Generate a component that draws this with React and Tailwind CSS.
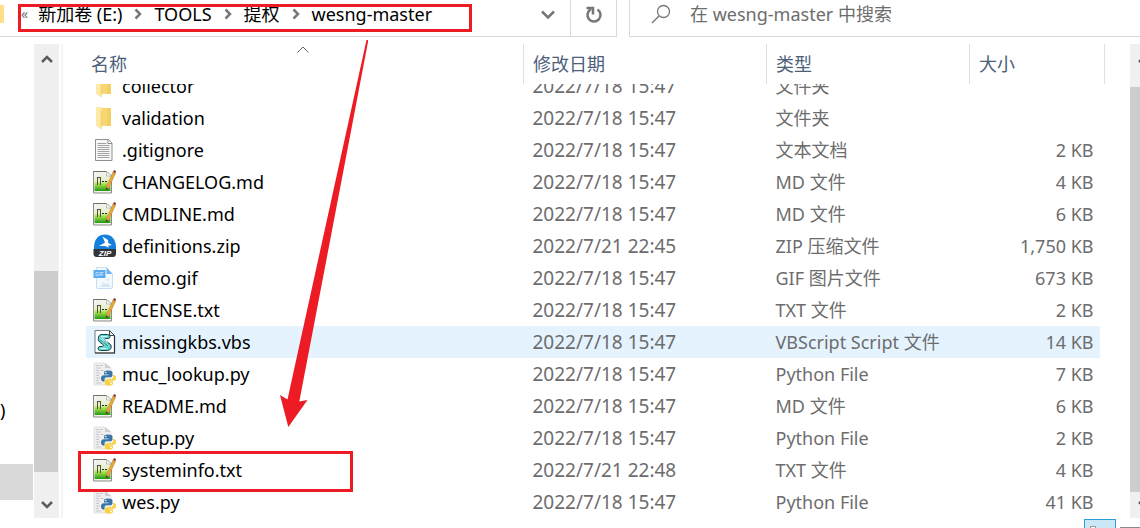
import { useState } from "react"

const files = [
  { name: "collector", icon: "folder", date: "2022/7/18 15:47", type: "文件夹", size: "" },
  { name: "validation", icon: "folder", date: "2022/7/18 15:47", type: "文件夹", size: "" },
  { name: ".gitignore", icon: "text", date: "2022/7/18 15:47", type: "文本文档", size: "2 KB" },
  { name: "CHANGELOG.md", icon: "notepad", date: "2022/7/18 15:47", type: "MD 文件", size: "4 KB" },
  { name: "CMDLINE.md", icon: "notepad", date: "2022/7/18 15:47", type: "MD 文件", size: "6 KB" },
  { name: "definitions.zip", icon: "zip", date: "2022/7/21 22:45", type: "ZIP 压缩文件", size: "1,750 KB" },
  { name: "demo.gif", icon: "gif", date: "2022/7/18 15:47", type: "GIF 图片文件", size: "673 KB" },
  { name: "LICENSE.txt", icon: "notepad", date: "2022/7/18 15:47", type: "TXT 文件", size: "2 KB" },
  { name: "missingkbs.vbs", icon: "script", date: "2022/7/18 15:47", type: "VBScript Script 文件", size: "14 KB" },
  { name: "muc_lookup.py", icon: "python", date: "2022/7/18 15:47", type: "Python File", size: "7 KB" },
  { name: "README.md", icon: "notepad", date: "2022/7/18 15:47", type: "MD 文件", size: "6 KB" },
  { name: "setup.py", icon: "python", date: "2022/7/18 15:47", type: "Python File", size: "2 KB" },
  { name: "systeminfo.txt", icon: "notepad", date: "2022/7/21 22:48", type: "TXT 文件", size: "4 KB" },
  { name: "wes.py", icon: "python", date: "2022/7/18 15:47", type: "Python File", size: "41 KB" },
]

function FolderIcon() {
  return (
    <svg width="24" height="26" viewBox="0 0 24 26" className="shrink-0">
      <path d="M8 3h10v18H8z" fill="#f7d674" />
      <path d="M14 3h4v18h-4z" fill="#f5cf62" />
      <path d="M3 2h5.500v2.500l-0.500 19.500L3 21z" fill="#ffe9a6" />
      <path d="M8.200 6v18" stroke="#f0cb66" strokeWidth="0.800" />
    </svg>
  )
}

function TextIcon() {
  return (
    <svg width="24" height="26" viewBox="0 0 24 26" className="shrink-0">
      <path d="M2.500 2.500h13l3.500 3.500v17.500H2.500z" fill="#f7f7f7" stroke="#8f8f8f" />
      <path d="M15 2.500V6.500h4" fill="#fff" stroke="#8f8f8f" />
      <path d="M4.500 6.500h9M4.500 8.500h12M4.500 10.500h12M4.500 12.500h12M4.500 14.500h12M4.500 16.500h12M4.500 18.500h12M4.500 20.500h12" stroke="#a3a3a3" />
    </svg>
  )
}

function NotepadIcon() {
  return (
    <svg width="24" height="26" viewBox="0 0 24 26" className="shrink-0">
      <defs>
        <linearGradient id="note" x1="0" y1="0" x2="0" y2="1">
          <stop offset="0" stopColor="#f0f3ea" />
          <stop offset="0.400" stopColor="#e4f0c4" />
          <stop offset="0.600" stopColor="#a4dc4a" />
          <stop offset="1" stopColor="#1f9a12" />
        </linearGradient>
      </defs>
      <path d="M0.500 2.500h13l5 4.500v17h-18z" fill="#f1f1ee" stroke="#8c8c86" />
      <path d="M1.500 5.500h16v16.500h-16z" fill="url(#note)" />
      <path d="M0.500 2.500h13" stroke="#5c5c55" strokeDasharray="1.500 1" />
      <path d="M13.500 2.500v4.500h5z" fill="#fff" stroke="#a5a5a0" strokeWidth="0.700" />
      <path d="M4.500 8v8M7.500 8v8M4 8.500h4" fill="none" stroke="#4a523f" />
      <path d="M9 12.500h2M12 12.500h2" stroke="#26331c" strokeWidth="1.200" />
      <path d="M13 18.500L20 3l2.500 1.200L15.500 19.500z" fill="#eda935" stroke="#a8742a" strokeWidth="0.500" />
      <path d="M20 3L21 1l2 1-0.500 2.200z" fill="#8a3a36" />
      <path d="M13 18.500l2.500 1-2.700 2.300z" fill="#544025" />
    </svg>
  )
}

function ZipIcon() {
  return (
    <svg width="24" height="26" viewBox="0 0 24 26" className="shrink-0">
      <path d="M1 14C1 6 6 1.500 12 1.500S23 6 23 14v3H1z" fill="#147fdc" />
      <path d="M9.500 3.500l5.500 3.500 0.200 3 3.800 2-4 0.800 1 2-4-1.800H6l3.500-2 2.500-1.500z" fill="#fff" />
      <path d="M0.500 16h22.500v5.500q-0.500 2.500-3 2.500H3.500q-2.500 0-3-2.500z" fill="#32363b" />
      <text x="12" y="23" textAnchor="middle" fontSize="8" fontWeight="700" fontStyle="italic" fill="#fff" fontFamily="Liberation Sans, sans-serif">ZIP</text>
    </svg>
  )
}

function GifIcon() {
  return (
    <svg width="24" height="26" viewBox="0 0 24 26" className="shrink-0">
      <path d="M3.500 2.500h10L19.500 9v13q0 1.500-1.500 1.500H5q-1.500 0-1.500-1.500z" fill="#f4f9fe" stroke="#c5def5" />
      <path d="M13.500 2.500L19.500 9h-6z" fill="#6db5f2" />
      <path d="M7 22l3.500-5 2.500 2.500 2-1.500 3 4z" fill="#d3e7f9" />
      <circle cx="14.500" cy="14.500" r="1.500" fill="#e0eefb" />
      <rect x="0.500" y="5" width="12" height="8" fill="#5aabf0" />
      <text x="6.500" y="11" textAnchor="middle" fontSize="5" fontWeight="700" fill="#c9e4fc" fontFamily="Liberation Sans, sans-serif">GIF</text>
    </svg>
  )
}

function ScriptIcon() {
  return (
    <svg width="24" height="26" viewBox="0 0 24 26" className="shrink-0">
      <path d="M2 1.500h14.500l5 5V24H2z" fill="#fff" stroke="#777" />
      <path d="M21.500 7v17H2" fill="none" stroke="#333" strokeWidth="1.200" />
      <path d="M16.500 1.500v5h5z" fill="#e8e8e8" stroke="#444" />
      <path d="M8 5.500h6.500q2.500 0 2.500 2t-2 2h-2.500q-1.500 0.500-0.500 2l5 3.500q2 2 1 4-1 2.500-3.500 2.500H7.500q-2.500 0-2.500-2t2-2h2.500q1.500-0.500 0.500-2L6.500 13Q4.500 11 5.500 8q0.500-2 2.500-2.500z" fill="#62d5d3" stroke="#16484c" />
      <path d="M8 7.500h6.500M7.500 10l8 7M7.500 19.500h6M8.500 8.500l6 5" fill="none" stroke="#e6ffff" strokeWidth="0.900" />
      <path d="M10.500 13l4.500 4M7.500 11l2 2" stroke="#153e42" strokeWidth="0.700" />
    </svg>
  )
}

function PythonIcon() {
  return (
    <svg width="24" height="26" viewBox="0 0 24 26" className="shrink-0">
      <path d="M1 2h11l6 5v17H1z" fill="#efefef" stroke="#dcdcdc" strokeWidth="0.800" />
      <path d="M12 2v5h6z" fill="#cfcfcf" />
      <path d="M3 4.500h3M7 4.500h3M3 7h5M3 9.500h3M7.500 9.500h3M3 12h4M3 14.500h3M3 17h4M3 19.500h3M3 22h5" stroke="#c6c6c6" />
      <path d="M15 9.500c-3 0-4 0.800-4 2.200v1.800h4.500v0.800h-5C8.800 14.300 8 16 8 17.500s0.700 3 2 3h1.500v-2c0-1.500 1-2.300 2.300-2.300h3.700c1.200 0 2-0.800 2-2v-2.500c0-1.500-1.500-2.200-4.500-2.200z" fill="#3b74a8" />
      <path d="M16 24.500c3 0 4-0.800 4-2.200v-1.800h-4.500v-0.800h5c1.600 0 2.500-1 2.500-2.800 0-1.600-0.500-3-2-3h-1v2c0 1.500-1 2.300-2.300 2.300h-4c-1.200 0-2 0.800-2 2v2.300c0 1.500 1.500 2 4.300 2z" fill="#fbd03f" />
      <circle cx="12.800" cy="11.600" r="0.800" fill="#fff" />
      <circle cx="18.200" cy="22.400" r="0.800" fill="#fff" />
    </svg>
  )
}

const icons = {
  folder: FolderIcon,
  text: TextIcon,
  notepad: NotepadIcon,
  zip: ZipIcon,
  gif: GifIcon,
  script: ScriptIcon,
  python: PythonIcon,
}

function Crumb({ children, last }) {
  return (
    <>
      <a href="#" className="whitespace-nowrap text-black">{children}</a>
      {!last && (
        <svg width="8" height="12" viewBox="0 0 8 12" className="mx-3 shrink-0">
          <path d="M1.500 1.500L6 6l-4.500 4.500" fill="none" stroke="#777" strokeWidth="2.500" />
        </svg>
      )}
    </>
  )
}

function AddressBar() {
  const [query, setQuery] = useState("")

  return (
    <header className="flex gap-3">
      <div className="flex h-[37px] w-[617px] shrink-0 border-r border-b border-[#d9d9d9]">
        <nav aria-label="路径" className="flex flex-1 items-center pb-2">
          <span className="h-[18px] w-1 bg-[#ffe08a]" />
          <span className="mr-2.5 ml-[17px] text-sm text-gray-500">«</span>
          <Crumb>新加卷 (E:)</Crumb>
          <Crumb>TOOLS</Crumb>
          <Crumb>提权</Crumb>
          <Crumb last>wesng-master</Crumb>
        </nav>
        <button aria-label="以前的位置" className="flex w-11 items-center justify-center pb-1.5">
          <svg width="14" height="10" viewBox="0 0 14 10">
            <path d="M1 1.500l6 6 6-6" fill="none" stroke="#777" strokeWidth="2.500" />
          </svg>
        </button>
        <button aria-label="刷新" className="flex w-[46px] items-center justify-center border-l border-[#d9d9d9] pb-1.5">
          <svg width="18" height="18" viewBox="0 0 18 18">
            <path d="M12.500 3.500a6.500 6.500 0 1 1-6.500-0.300" fill="none" stroke="#777" strokeWidth="2.500" />
            <path d="M1.500 2h6.500v6.500" fill="none" stroke="#777" strokeWidth="2.500" />
          </svg>
        </button>
      </div>
      <label className="flex h-[37px] flex-1 items-center border-b border-l border-[#d9d9d9] pb-2 pl-[21px]">
        <svg width="20" height="20" viewBox="0 0 20 20" className="shrink-0">
          <circle cx="12.500" cy="7.500" r="6" fill="none" stroke="#777" strokeWidth="1.300" />
          <path d="M8 12l-7 7" stroke="#777" strokeWidth="1.500" />
        </svg>
        <input
          type="text"
          aria-label="搜索"
          placeholder="在 wesng-master 中搜索"
          className="ml-[19px] w-full outline-none placeholder:text-[#6d6d6d]"
          value={query}
          onChange={(e) => setQuery(e.target.value)}
        />
      </label>
    </header>
  )
}

function ArrowButton({ label, down }) {
  return (
    <button aria-label={label} className="flex h-[26px] w-[25px] shrink-0 items-center justify-center">
      <svg width="12" height="10" viewBox="0 0 12 10">
        <path d={down ? "M1 2l5 5 5-5" : "M1 8l5-5 5 5"} fill="none" stroke="#5c5c5c" strokeWidth="2.500" />
      </svg>
    </button>
  )
}

function Sidebar() {
  return (
    <aside className="flex shrink-0">
      <ul className="flex w-[34px] flex-col justify-end pr-px pb-[18px]">
        <li className="flex h-9 items-center text-black">)</li>
        <li className="h-9" />
        <li className="h-9 bg-[#d9d9d9]" />
      </ul>
      <div className="flex w-[25px] flex-col bg-[#f0f0f0] pt-0.5">
        <ArrowButton label="向上滚动" />
        <div className="flex-1" />
        <div className="mr-px h-[201px] bg-[#cdcdcd]" />
        <div className="h-5" />
        <ArrowButton label="向下滚动" down />
      </div>
      <div className="ml-0.5 w-0.5 bg-[#f5f5f5]" />
    </aside>
  )
}

function FileRow({ file, first, hovered }) {
  const Icon = icons[file.icon]
  // the top row is scrolled halfway under the column headers
  const box = first ? "flex h-[18px] items-end overflow-hidden" : "flex h-8 items-center"

  return (
    <tr>
      <td className={hovered ? "bg-[#e5f3ff]" : ""}>
        <div className={`${box} pl-[7px]`}>
          <div className="flex h-8 shrink-0 items-center gap-[5px] text-black">
            <Icon />
            {file.name}
          </div>
        </div>
      </td>
      <td className={hovered ? "bg-[#e5f3ff]" : ""}>
        <div className={`${box} pl-[9px]`}>
          <span className="h-8 shrink-0 text-[19px] leading-8">{file.date}</span>
        </div>
      </td>
      <td className={hovered ? "bg-[#e5f3ff]" : ""}>
        <div className={`${box} pl-[9px]`}>
          <span className="h-8 shrink-0 leading-8">{file.type}</span>
        </div>
      </td>
      <td className={hovered ? "bg-[#e5f3ff]" : ""}>
        <div className={`${box} justify-end pr-1.5`}>{file.size}</div>
      </td>
      <td />
    </tr>
  )
}

function FileTable() {
  return (
    <main className="min-w-0 flex-1 pr-[25px] pl-[23px]">
      <table className="w-full table-fixed text-[#6d6d6d]">
        <colgroup>
          <col />
          <col className="w-[243px]" />
          <col className="w-[203px]" />
          <col className="w-[130px]" />
          <col className="w-[5px]" />
        </colgroup>
        <thead className="text-left text-[#4c607a]">
          <tr className="h-10">
            <th className="relative border-r border-[#e0e0e0] pl-[5px] font-normal">
              <svg width="12" height="7" viewBox="0 0 12 7" className="absolute top-0.5 left-1/2 -ml-2">
                <path d="M0.500 6.500l5.500-5.500 5.500 5.500" fill="none" stroke="#666" />
              </svg>
              名称
            </th>
            <th className="border-r border-[#e0e0e0] pl-[9px] font-normal">修改日期</th>
            <th className="border-r border-[#e0e0e0] pl-[9px] font-normal">类型</th>
            <th colSpan={2} className="border-r border-[#e0e0e0] pl-[9px] font-normal">大小</th>
          </tr>
        </thead>
        <tbody>
          {files.map((file, i) => (
            <FileRow key={file.name} file={file} first={i === 0} hovered={file.name === "missingkbs.vbs"} />
          ))}
        </tbody>
      </table>
    </main>
  )
}

export default function App() {
  return (
    <div className="relative overflow-hidden bg-white font-['Noto_Sans','Noto_Sans_CJK_SC',sans-serif] text-[18px] leading-6">
      <AddressBar />

      <div className="mt-[7px] flex">
        <Sidebar />
        <FileTable />
        <div className="flex w-2.5 shrink-0 flex-col overflow-hidden bg-[#f0f0f0]">
          <div className="flex h-[43px] pt-0.5">
            <div className="ml-px"><ArrowButton label="列表向上滚动" /></div>
          </div>
          <div className="flex-1 bg-[#cdcdcd]" />
          <div className="ml-px"><ArrowButton label="列表向下滚动" down /></div>
        </div>
      </div>

      {/* view switcher */}
      <footer className="mt-px flex h-[9px] items-start justify-end gap-1 overflow-hidden">
        <button aria-label="详细信息" className="flex h-6 w-8 border border-[#2a9bd7] bg-[#cce8f6] pt-1.5 pl-[5px]">
          <span className="h-2 w-1.5 border border-[#9a9a9a] bg-white" />
        </button>
        <button aria-label="大图标" className="mt-2 h-5 w-5 border-t border-[#8c8c8c]" />
      </footer>

      {/* red marks */}
      <div className="pointer-events-none absolute top-1 left-[18px] h-7 w-[454px] border-3 border-[#ed1c24]" />
      <div className="pointer-events-none absolute top-[451px] left-[78px] h-[41px] w-[275px] border-3 border-[#ed1c24]" />
      <svg width="30" height="388" viewBox="279 40 30 388" className="pointer-events-none absolute top-10 left-[279px] overflow-visible">
        <path d="M366.500 40h1.500v2L313 330 299.300 401.500 307.500 400 288.300 427 280 395 287.500 399.500 302.700 330z" fill="#ed1c24" />
      </svg>
    </div>
  )
}
